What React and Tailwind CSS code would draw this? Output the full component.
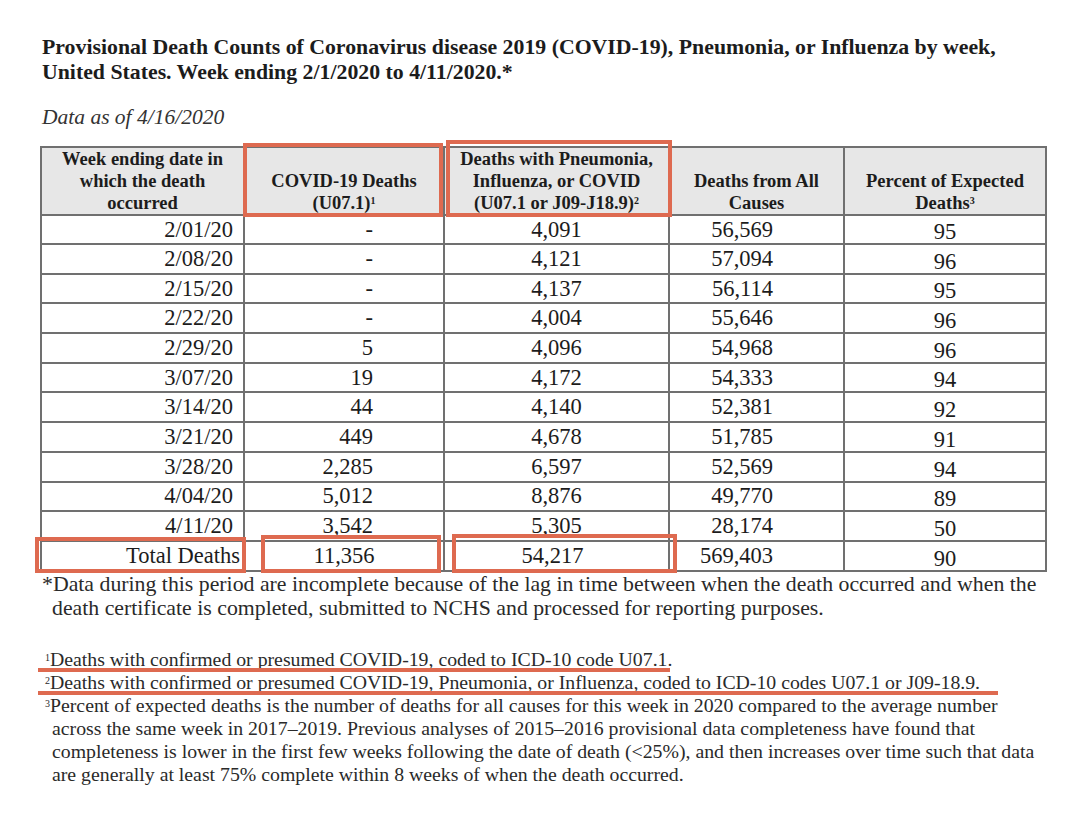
import React from 'react';

const rows = [
  ['2/01/20', '-', '4,091', '56,569', '95'],
  ['2/08/20', '-', '4,121', '57,094', '96'],
  ['2/15/20', '-', '4,137', '56,114', '95'],
  ['2/22/20', '-', '4,004', '55,646', '96'],
  ['2/29/20', '5', '4,096', '54,968', '96'],
  ['3/07/20', '19', '4,172', '54,333', '94'],
  ['3/14/20', '44', '4,140', '52,381', '92'],
  ['3/21/20', '449', '4,678', '51,785', '91'],
  ['3/28/20', '2,285', '6,597', '52,569', '94'],
  ['4/04/20', '5,012', '8,876', '49,770', '89'],
  ['4/11/20', '3,542', '5,305', '28,174', '50'],
];

const total = ['Total Deaths', '11,356', '54,217', '569,403', '90'];

// orange marker boxes drawn over the scan
const marks = [
  'left-[243px] top-[143px] w-[200px] h-[74px]',
  'left-[446px] top-[140px] w-[226px] h-[77px]',
  'left-[35px] top-[537px] w-[211px] h-[36px]',
  'left-[261px] top-[535px] w-[180px] h-[38px]',
  'left-[452px] top-[534px] w-[225px] h-[39px]',
];

const cell = 'border-2 border-[#707070] align-middle';

export default function App() {
  return (
    <div className="relative w-[1080px] h-[819px] overflow-hidden bg-white text-[#1c1c1c] font-['Liberation_Serif','Times_New_Roman',serif]">
      <div className="pl-[42px] pt-[35px]">
        <h1 className="text-[21.8px] leading-[25px] font-bold whitespace-nowrap">
          Provisional Death Counts of Coronavirus disease 2019 (COVID-19), Pneumonia, or Influenza by week,
          <br />
          United States. Week ending 2/1/2020 to 4/11/2020.*
        </h1>
        <p className="mt-[20px] text-[21.5px] leading-[24px] italic text-[#333]">Data as of 4/16/2020</p>
      </div>

      {/* table */}
      <table className="ml-[40px] mt-[17px] border-collapse table-fixed w-[1005px]">
        <colgroup>
          <col className="w-[203px]" />
          <col className="w-[200px]" />
          <col className="w-[225px]" />
          <col className="w-[175px]" />
          <col className="w-[202px]" />
        </colgroup>
        <thead>
          <tr className="h-[67px] bg-[#e7e7e7] text-[18.5px] leading-[22px] font-bold">
            <th className="border-2 border-[#707070] align-bottom font-bold">
              Week ending date in<br />which the death<br />occurred
            </th>
            <th className="border-2 border-[#707070] align-bottom font-bold">
              COVID-19 Deaths<br />(U07.1)<sup className="text-[10px]">1</sup>
            </th>
            <th className="border-2 border-[#707070] align-bottom font-bold">
              Deaths with Pneumonia,<br />Influenza, or COVID<br />(U07.1 or J09-J18.9)<sup className="text-[10px]">2</sup>
            </th>
            <th className="border-2 border-[#707070] align-bottom font-bold">
              Deaths from All<br />Causes
            </th>
            <th className="border-2 border-[#707070] align-bottom font-bold">
              Percent of Expected<br />Deaths<sup className="text-[10px]">3</sup>
            </th>
          </tr>
        </thead>
        <tbody className="text-[22.5px] leading-[24px]">
          {rows.map((r, i) => (
            <tr key={r[0]} className={i === 0 ? 'h-[29px]' : 'h-[29.7px]'}>
              <td className={`${cell} text-right pr-[10px]`}>{r[0]}</td>
              <td className={`${cell} text-right pr-[70px]`}>{r[1]}</td>
              <td className={`${cell} text-center`}>{r[2]}</td>
              <td className={`${cell} text-right pr-[70px]`}>{r[3]}</td>
              <td className="border-2 border-[#707070] text-center align-bottom leading-[22px]">{r[4]}</td>
            </tr>
          ))}
          <tr className="h-[29.7px]">
            <td className={`${cell} text-right pr-[3px]`}>{total[0]}</td>
            <td className={`${cell} text-center`}>{total[1]}</td>
            <td className={`${cell} text-center pr-[8px]`}>{total[2]}</td>
            <td className={`${cell} text-right pr-[70px]`}>{total[3]}</td>
            <td className="border-2 border-[#707070] text-center align-bottom leading-[22px]">{total[4]}</td>
          </tr>
        </tbody>
      </table>

      <p className="pl-[42px] text-[21.8px] leading-[24px] text-[#2a2a2a] whitespace-nowrap">
        *Data during this period are incomplete because of the lag in time between when the death occurred and when the
        <br />
        <span className="pl-[10px]">death certificate is completed, submitted to NCHS and processed for reporting purposes.</span>
      </p>

      {/* footnotes */}
      <div className="mt-[28px] pl-[45px] text-[19.8px] leading-[23px] text-[#2a2a2a] whitespace-nowrap">
        <p>
          <sup className="text-[10px]">1</sup>Deaths with confirmed or presumed COVID-19, coded to ICD-10 code U07.1.
        </p>
        <p>
          <sup className="text-[10px]">2</sup>Deaths with confirmed or presumed COVID-19, Pneumonia, or Influenza, coded to ICD-10 codes U07.1 or J09-18.9.
        </p>
        <p>
          <sup className="text-[10px]">3</sup>Percent of expected deaths is the number of deaths for all causes for this week in 2020 compared to the average number
        </p>
        <div className="pl-[7px]">
          <p>across the same week in 2017–2019. Previous analyses of 2015–2016 provisional data completeness have found that</p>
          <p>completeness is lower in the first few weeks following the date of death (&lt;25%), and then increases over time such that data</p>
          <p>are generally at least 75% complete within 8 weeks of when the death occurred.</p>
        </div>
      </div>

      {marks.map((m) => (
        <div key={m} className={`absolute border-[4px] border-[#de6a50] ${m}`} />
      ))}
      <div className="absolute left-[38px] top-[668px] w-[632px] h-[4px] bg-[#de6a50]" />
      <div className="absolute left-[38px] top-[691px] w-[960px] h-[4px] bg-[#de6a50]" />
    </div>
  );
}
